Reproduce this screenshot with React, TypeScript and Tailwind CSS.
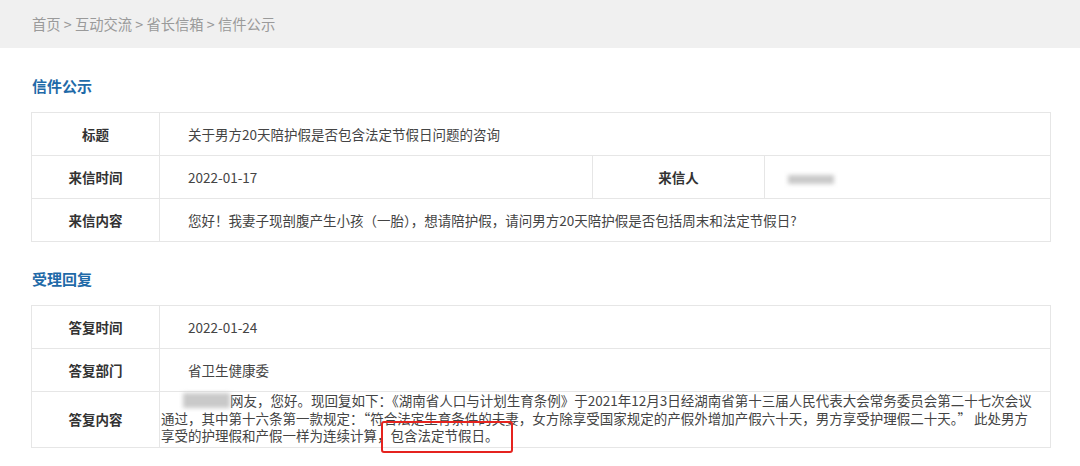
const font = { fontFamily: '"Noto Sans CJK SC", "Noto Sans", sans-serif' };

function Blur({ className }: { className: string }) {
  return <span className={`inline-block bg-[#c9c9c9] blur-[2px] ${className}`} />;
}

export default function App() {
  return (
    <div className="w-[1080px] h-[466px] bg-white overflow-hidden" style={font}>
      {/* Breadcrumb */}
      <div className="h-12 bg-[#f0f0f0] flex items-center pl-8 text-[14.3px] text-[#9a9a9a]">
        首页 &gt; 互动交流 &gt; 省长信箱 &gt; 信件公示
      </div>

      <div className="pl-[31px]">
        {/* 信件公示 */}
        <div className="pt-7 pb-4">
          <h2 className="pl-px text-[15px] leading-5 font-bold text-[#1f6aa8]">信件公示</h2>
        </div>
        <table className="table-fixed w-[1020px] border-collapse text-[13.5px] text-[#444]">
          <colgroup>
            <col className="w-[128px]" />
            <col className="w-[433px]" />
            <col className="w-[172px]" />
            <col />
          </colgroup>
          <tbody>
            <tr className="h-[43px]">
              <td className="border border-[#e6e6e6] text-center font-bold text-[#333]">标题</td>
              <td colSpan={3} className="border border-[#e6e6e6] pl-7">
                关于男方20天陪护假是否包含法定节假日问题的咨询
              </td>
            </tr>
            <tr className="h-[43px]">
              <td className="border border-[#e6e6e6] text-center font-bold text-[#333]">来信时间</td>
              <td className="border border-[#e6e6e6] pl-7">2022-01-17</td>
              <td className="border border-[#e6e6e6] text-center font-bold text-[#333]">来信人</td>
              <td className="border border-[#e6e6e6] pl-[23px]">
                <Blur className="w-[46px] h-[9px] align-middle" />
              </td>
            </tr>
            <tr className="h-[43px]">
              <td className="border border-[#e6e6e6] text-center font-bold text-[#333]">来信内容</td>
              <td colSpan={3} className="border border-[#e6e6e6] pl-7">
                您好！我妻子现剖腹产生小孩（一胎），想请陪护假，请问男方20天陪护假是否包括周末和法定节假日?
              </td>
            </tr>
          </tbody>
        </table>

        {/* 受理回复 */}
        <div className="pt-[27px] pb-4">
          <h2 className="pl-px text-[15px] leading-5 font-bold text-[#1f6aa8]">受理回复</h2>
        </div>
        <table className="table-fixed w-[1020px] border-collapse text-[13.5px] text-[#444]">
          <colgroup>
            <col className="w-[128px]" />
            <col />
          </colgroup>
          <tbody>
            <tr className="h-[43px]">
              <td className="border border-[#e6e6e6] text-center font-bold text-[#333]">答复时间</td>
              <td className="border border-[#e6e6e6] pl-7">2022-01-24</td>
            </tr>
            <tr className="h-[43px]">
              <td className="border border-[#e6e6e6] text-center font-bold text-[#333]">答复部门</td>
              <td className="border border-[#e6e6e6] pl-7">省卫生健康委</td>
            </tr>
            <tr className="h-[55px]">
              <td className="border border-[#e6e6e6] text-center font-bold text-[#333]">答复内容</td>
              <td className="border border-[#e6e6e6] pl-px pt-0 pb-[2px] align-top leading-[17.5px] whitespace-nowrap">
                <Blur className="ml-[22px] w-[47px] h-[15px] align-[-2px]" />
                网友，您好。现回复如下：《湖南省人口与计划生育条例》于2021年12月3日经湖南省第十三届人民代表大会常务委员会第二十七次会议
                <br />
                通过，其中第十六条第一款规定：“符合法定生育条件的夫妻，女方除享受国家规定的产假外增加产假六十天，男方享受护理假二十天。” 此处男方
                <br />
                享受的护理假和产假一样为连续计算，
                <span className="relative">
                  包含法定节假日。
                  <span className="absolute -left-[10px] -right-[14px] -top-[4px] -bottom-[8px] border-[2.5px] border-[#e5231f] rounded-[3px]" />
                </span>
              </td>
            </tr>
          </tbody>
        </table>
      </div>
    </div>
  );
}
